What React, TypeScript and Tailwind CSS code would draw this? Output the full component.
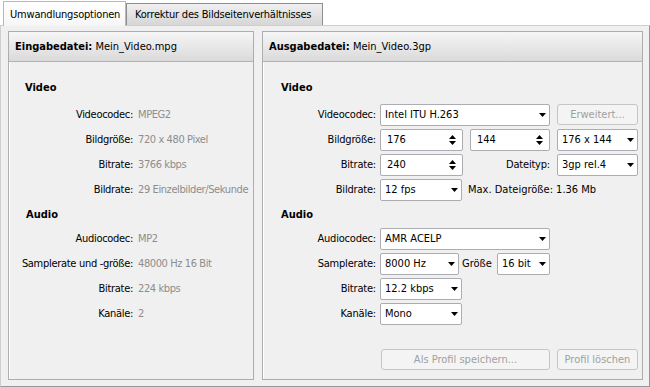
import React from "react";

const font = { fontFamily: '"DejaVu Sans Condensed", "DejaVu Sans", Tahoma, sans-serif' };

function Arrow() {
  return (
    <svg width="7" height="4" viewBox="0 0 7 4" className="shrink-0">
      <path d="M0 0H7L3.5 4Z" fill="#000" />
    </svg>
  );
}

function SpinArrows() {
  return (
    <svg width="7" height="12" viewBox="0 0 7 12" className="shrink-0">
      <path d="M3.5 1L7 5H0Z" fill="#000" />
      <path d="M0 7H7L3.5 11Z" fill="#000" />
    </svg>
  );
}

function Combo({ className, text }: { className: string; text: string }) {
  return (
    <div
      className={
        "h-[22px] bg-white border border-[#abadb3] rounded-[2px] flex items-center justify-between pl-[4px] pr-[3px] shrink-0 " +
        className
      }
    >
      <span className="text-black whitespace-nowrap overflow-hidden">{text}</span>
      <Arrow />
    </div>
  );
}

function Spin({ className, text }: { className: string; text: string }) {
  return (
    <div
      className={
        "h-[22px] bg-white border border-[#abadb3] rounded-[2px] flex items-center justify-between pl-[6px] pr-[6px] shrink-0 " +
        className
      }
    >
      <span className="text-black">{text}</span>
      <SpinArrows />
    </div>
  );
}

function Btn({ className, text }: { className: string; text: string }) {
  return (
    <div
      className={
        "h-[21px] bg-[#f4f4f4] border border-[#c5c5c5] rounded-[3px] flex items-center justify-center text-[#a0a0a0] shrink-0 whitespace-nowrap " +
        className
      }
    >
      {text}
    </div>
  );
}

function LeftRow({ label, value }: { label: string; value: string }) {
  return (
    <div className="h-[25px] flex items-center">
      <div className="w-[124px] text-right text-black whitespace-nowrap tracking-[-0.3px]">{label}</div>
      <div className="ml-[5px] text-[#8d8d8d] whitespace-nowrap tracking-[-0.4px]">{value}</div>
    </div>
  );
}

function RightRow({ label, children }: { label: string; children: React.ReactNode }) {
  return (
    <div className="h-[25px] flex items-center">
      <div className="w-[113px] text-right text-black whitespace-nowrap tracking-[-0.2px]">{label}</div>
      <div className="ml-[4px] flex items-center">{children}</div>
    </div>
  );
}

function Header({ bold, rest }: { bold: string; rest: string }) {
  return (
    <div className="h-[30px] bg-gradient-to-b from-[#f6f6f6] to-[#dadada] border-b border-[#b2b2b2] flex items-center pl-[6px] shrink-0">
      <span className="font-bold text-black">{bold}</span>
      <span className="text-black">&nbsp;{rest}</span>
    </div>
  );
}

export default function App() {
  return (
    <div className="w-[650px] h-[387px] bg-white text-[11px] leading-[13px] overflow-hidden" style={font}>
      <div className="h-[25px] flex items-end pl-[3px]">
        <div className="w-[123px] h-[25px] bg-gradient-to-b from-[#ffffff] to-[#f6f6f6] border border-b-0 border-[#b9b9b9] flex items-center pl-[6px] text-black relative z-10 mb-[-1px] tracking-[-0.2px]">
          Umwandlungsoptionen
        </div>
        <div className="w-[197px] h-[22px] bg-gradient-to-b from-[#f0f0f0] to-[#d6d6d6] border border-b-0 border-[#8e8e8e] flex items-center pl-[8px] text-black tracking-[-0.2px]">
          Korrektur des Bildseitenverhältnisses
        </div>
      </div>
      <div className="w-[650px] h-[362px] bg-[#f0f0f0] border-t border-l border-[#cfcfcf] border-r border-b border-r-[#979797] border-b-[#979797] pl-[7px] pt-[5px] pr-[6px] pb-[6px] flex gap-[8px]">
        {/* Left panel */}
        <div className="w-[246px] border border-[#adadad] flex flex-col bg-[#f0f0f0] shadow-[inset_1px_1px_0_#ffffff] overflow-hidden">
          <Header bold="Eingabedatei:" rest="Mein_Video.mpg" />
          <div className="pt-[13px] flex flex-col">
            <div className="h-[27px] flex items-center pb-[2px] pl-[16px] font-bold text-black">Video</div>
            <LeftRow label="Videocodec:" value="MPEG2" />
            <LeftRow label="Bildgröße:" value="720 x 480 Pixel" />
            <LeftRow label="Bitrate:" value="3766 kbps" />
            <LeftRow label="Bildrate:" value="29 Einzelbilder/Sekunde" />
            <div className="h-[24px] flex items-center pl-[17px] font-bold text-black">Audio</div>
            <LeftRow label="Audiocodec:" value="MP2" />
            <LeftRow label="Samplerate und -größe:" value="48000 Hz 16 Bit" />
            <LeftRow label="Bitrate:" value="224 kbps" />
            <LeftRow label="Kanäle:" value="2" />
          </div>
        </div>
        {/* Right panel */}
        <div className="flex-1 border border-[#adadad] flex flex-col bg-[#f0f0f0] shadow-[inset_1px_1px_0_#ffffff]">
          <Header bold="Ausgabedatei:" rest="Mein_Video.3gp" />
          <div className="pt-[13px] flex flex-col flex-1">
            <div className="h-[27px] flex items-center pb-[2px] pl-[18px] font-bold text-black">Video</div>
            <RightRow label="Videocodec:">
              <Combo className="w-[170px]" text="Intel ITU H.263" />
              <Btn className="w-[81px] ml-[7px]" text="Erweitert..." />
            </RightRow>
            <RightRow label="Bildgröße:">
              <Spin className="w-[83px]" text="176" />
              <Spin className="w-[80px] ml-[7px]" text="144" />
              <Combo className="w-[81px] ml-[7px]" text="176 x 144" />
            </RightRow>
            <RightRow label="Bitrate:">
              <Spin className="w-[83px]" text="240" />
              <div className="w-[80px] ml-[7px] text-right text-black whitespace-nowrap tracking-[-0.2px]">Dateityp:</div>
              <Combo className="w-[81px] ml-[7px]" text="3gp rel.4" />
            </RightRow>
            <RightRow label="Bildrate:">
              <Combo className="w-[82px]" text="12 fps" />
              <div className="ml-[6px] text-black whitespace-nowrap">Max. Dateigröße: 1.36 Mb</div>
            </RightRow>
            <div className="h-[24px] flex items-center pl-[18px] font-bold text-black">Audio</div>
            <RightRow label="Audiocodec:">
              <Combo className="w-[170px]" text="AMR ACELP" />
            </RightRow>
            <RightRow label="Samplerate:">
              <Combo className="w-[79px]" text="8000 Hz" />
              <div className="w-[38px] pl-[3px] text-black whitespace-nowrap">Größe</div>
              <Combo className="w-[53px]" text="16 bit" />
            </RightRow>
            <RightRow label="Bitrate:">
              <Combo className="w-[82px]" text="12.2 kbps" />
            </RightRow>
            <RightRow label="Kanäle:">
              <Combo className="w-[82px]" text="Mono" />
            </RightRow>
            <div className="flex-1" />
            <div className="flex justify-end pr-[4px] gap-[7px] mb-[9px]">
              <Btn className="w-[169px]" text="Als Profil speichern..." />
              <Btn className="w-[81px]" text="Profil löschen" />
            </div>
          </div>
        </div>
      </div>
    </div>
  );
}
